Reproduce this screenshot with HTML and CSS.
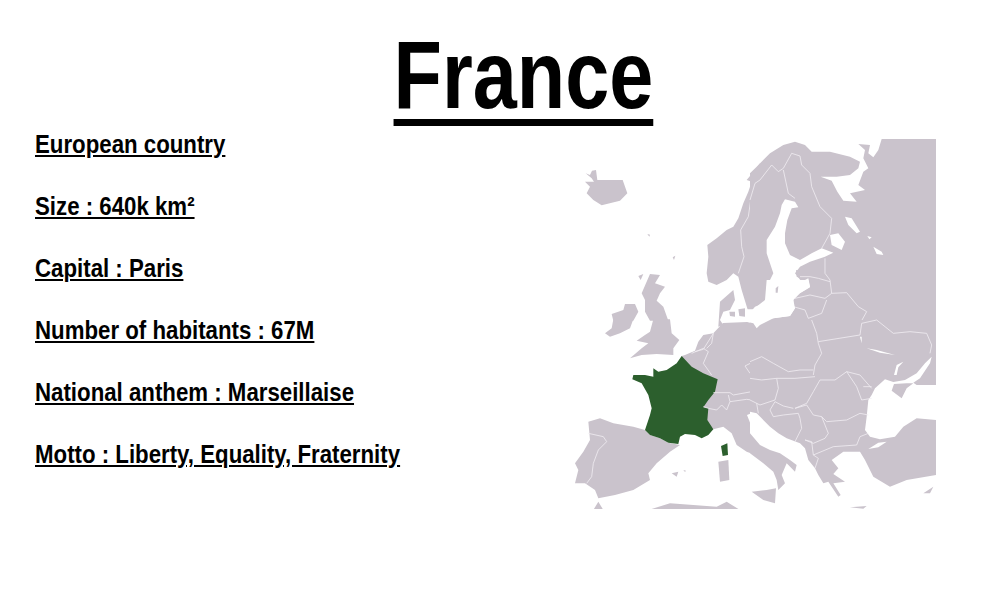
FILE: index.html
```html
<!DOCTYPE html>
<html lang="en">
<head>
    <meta charset="UTF-8">
    <meta name="viewport" content="width=device-width, initial-scale=1.0">
    <title>France</title>
    <link rel="stylesheet" href="styles.css">
</head>
<body>
    <h1 class="title"><span class="title-text">France</span></h1>
    <div class="content">
        <ul class="facts">
            <li>European country</li>
            <li>Size : 640k km²</li>
            <li>Capital : Paris</li>
            <li>Number of habitants : 67M</li>
            <li>National anthem : Marseillaise</li>
            <li>Motto : Liberty, Equality, Fraternity</li>
        </ul>
        <svg class="map" viewBox="574 139 362 370" width="362" height="370" role="img" aria-label="Map of Europe with France highlighted">
            <!-- north west -->
            <g transform="translate(570 130) scale(.33333)">
                <path class="land" d="M47 130 60 135 66 122 78 120 82 150 100 150 130 150 158 150 172 190 150 212 95 226 70 210 50 190 60 170 45 155 72 155 65 145Z"/>
                <path class="land" d="M570 100 555 120 530 150 545 155 535 185 520 220 505 265 490 290 470 300 440 325 412 345 415 380 410 430 415 455 440 465 470 450 490 430 505 440 515 480 535 545 555 548 570 530Z"/>
                <path class="land" d="M240 432 270 435 255 460 285 470 270 490 260 512 280 530 295 572 240 572 225 545 225 510 215 490Z"/>
                <path class="land" d="M125 552 160 540 165 522 195 522 205 545 190 572 130 572Z"/>
                <path class="land" d="M232 312 240 314 238 320Z M308 382 316 377 312 390Z M205 438 220 432 212 450Z"/>
                <path class="border" d="M570 150 545 190 535 260 512 300 515 350 522 380 505 430"/>
            </g>
            <!-- north east -->
            <g transform="translate(750 130) scale(.33333)">
                <path class="land" d="M395 27 558 27 558 572 0 572 0 130 20 110 60 70 100 45 135 35 165 45 185 65 240 65 300 80 330 95 325 115 300 135 260 140 212 140 245 152 262 185 280 212 320 215 300 190 345 180 325 165 340 125 355 115 340 85 345 60 325 42 360 45 355 70 370 82 385 60Z"/>
                <path class="sea" d="M105 208 135 215 145 232 125 235 112 270 105 310 105 340 120 375 150 390 185 370 215 355 250 368 225 380 180 395 150 410 135 430 155 455 175 445 180 470 165 480 130 500 130 525 135 535 120 558 70 565 0 572 0 548 15 530 55 515 50 470 70 430 50 370 50 330 75 290 90 250 95 225Z"/>
                <path class="sea" d="M240 315 265 310 285 335 275 360 245 345Z M285 260 305 265 330 305 320 310 295 285Z M352 318 365 322 358 328Z M370 350 395 365 400 375 380 372Z"/>
                <path class="land" d="M138 420 150 422 150 445 140 440Z M78 470 86 468 85 490 78 490Z"/>
                <path class="border" d="M0 210 15 160 30 150 65 105 85 125 100 115 125 70 150 78 155 105 180 130 185 170 210 230 245 265 240 310 215 355"/>
                <path class="border" d="M100 120 115 190 135 205"/>
                <path class="border" d="M225 385 225 430 240 450 245 490 290 488 325 530 350 545 335 572"/>
                <path class="border" d="M150 440 180 440 205 445 240 455"/>
                <path class="border" d="M135 505 180 495 225 505 245 490"/>
                <path class="border" d="M130 530 165 540 175 565 215 550 230 510"/>
            </g>
            <!-- south west -->
            <g transform="translate(570 320) scale(.33333)">
                <path class="land" d="M130 -2 190 -2 180 25 150 40 120 50 105 40 125 25Z"/>
                <path class="land" d="M250 -2 300 -2 305 40 328 60 310 85 310 105 260 102 215 105 180 115 215 85 235 70 200 62 225 45 240 35Z"/>
                <path class="land" d="M335 108 345 105 375 92 385 65 400 45 430 40 459 9 531 6 549 9 570 0 570 410 530 395 500 375 485 340 460 320 430 328 400 300Z"/>
                <path class="sea" d="M531 285 555 275 572 290 572 345 545 320Z"/>
                <path class="land" d="M55 305 90 295 130 310 190 320 225 330 240 345 270 355 295 368 330 375 300 395 260 430 235 460 240 480 190 510 135 525 85 535 75 510 45 490 15 490 25 450 15 430 40 395 60 360Z"/>
                <path class="land" d="M305 460 325 455 320 470Z M340 450 348 452 345 456Z"/>
                <path class="land" d="M445 425 475 420 478 480 450 485Z"/>
                <path class="land" d="M70 570 85 545 100 570Z M235 570 300 550 370 555 440 560 470 545 510 570Z M548 520 570 515 570 535Z"/>
                <path class="border" d="M55 340 100 350 110 365 85 390 70 430 65 470 50 490"/>
                <path class="border" d="M365 100 400 85 415 95 400 130 425 165"/>
                <path class="border" d="M375 95 400 88 430 40 425 70 410 85"/>
                <path class="france" d="M335 108 365 140 400 160 443 178 435 215 415 240 400 262 415 265 412 300 430 328 415 345 395 355 375 345 345 342 330 350 325 372 295 368 270 355 240 345 225 330 240 285 245 265 235 225 215 190 187 178 190 165 225 165 250 170 250 145 265 155 290 150 320 130Z"/>
                <path class="france" d="M453 378 472 370 474 405 458 408Z"/>
            </g>
            <!-- alps and central europe -->
            <g transform="translate(680 340) scale(.33333)">
                <path class="border" d="M100 158 150 158 160 165 215 155 215 135 238 125 290 115"/>
                <path class="border" d="M195 78 250 50 290 70 330 90 310 115 290 115 240 125 210 100 195 78"/>
                <path class="border" d="M235 0 250 50"/>
                <path class="border" d="M70 200 85 205 110 210 125 195 140 210 150 185 200 178 215 180 260 190 290 180"/>
                <path class="border" d="M145 165 150 185"/>
                <path class="border" d="M230 195 235 230"/>
            </g>
            <!-- south east -->
            <g transform="translate(750 320) scale(.33333)">
                <path class="land" d="M0 0 558 0 558 570 0 570Z"/>
                <path class="sea" d="M0 275 20 280 35 295 60 320 85 340 110 355 150 370 165 385 175 420 195 445 205 465 220 490 235 485 265 530 272 525 250 490 285 485 250 462 265 445 245 420 280 395 330 395 345 420 370 470 420 500 470 480 558 465 558 570 0 570Z"/>
                <path class="sea" d="M375 205 405 178 430 186 465 180 500 160 525 130 545 110 540 130 510 175 490 188 500 195 558 195 558 300 500 295 460 320 435 350 390 358 360 350 345 330 350 290 355 240 365 225Z"/>
                <path class="land" d="M432 192 470 190 490 190 470 205 455 235 425 212Z"/>
                <path class="sea" d="M350 85 380 90 435 105 390 98Z M432 165 440 135 460 125 445 142 440 165Z M330 50 335 50 335 70Z"/>
                <path class="sea" d="M355 387 385 368 410 365 385 382Z"/>
                <path class="land" d="M0 340 30 375 60 390 90 400 120 420 140 435 135 455 110 430 95 465 105 490 85 510 80 480 70 455 40 430 0 400Z"/>
                <path class="land" d="M5 515 50 510 78 505 75 550 40 540Z"/>
                <path class="land" d="M520 520 550 500 540 520Z M300 562 350 558 340 566Z"/>
                <path class="border" d="M185 0 200 40 205 70 215 100 195 135 190 165"/>
                <path class="border" d="M205 65 330 45 335 10 380 0 430 40 480 35 530 40 545 75 540 100"/>
                <path class="border" d="M0 125 35 110 70 130 115 155 150 150 190 150"/>
                <path class="border" d="M80 175 135 175 195 170"/>
                <path class="border" d="M210 180 190 215 170 250 135 265"/>
                <path class="border" d="M210 180 255 180 290 155 330 165 365 205"/>
                <path class="border" d="M290 155 320 200 335 240 365 235"/>
                <path class="border" d="M340 200 365 200"/>
                <path class="border" d="M215 290 230 305 290 300 330 280 355 285"/>
                <path class="border" d="M135 265 170 255 190 285 215 290 235 340 225 355 190 370 165 360"/>
                <path class="border" d="M190 405 250 380 320 375 330 350 355 340"/>
                <path class="border" d="M75 245 60 270 70 290 100 285 145 280 150 295 155 325 135 365"/>
                <path class="border" d="M75 245 100 258 130 265"/>
                <path class="border" d="M0 175 35 180 80 175 85 205 75 240 30 255 0 240"/>
                <path class="border" d="M20 250 25 280"/>
                <path class="border" d="M165 360 185 365 190 405 205 415 195 445"/>
            </g>
            <!-- baltic south coast, denmark -->
            <g transform="translate(710 280) scale(.33333)">
                <path class="land" d="M30 65 70 30 75 60 60 90 40 95 30 120 40 135 25 140Z"/>
                <path class="land" d="M58 95 75 95 75 110 60 108Z M85 88 105 85 105 110 88 108Z"/>
                <path class="sea" d="M105 88 130 88 165 60 170 0 295 0 300 22 270 40 250 60 255 85 240 108 190 115 150 135 140 145 130 130 110 125 105 110Z"/>
                <path class="land" d="M197 25 205 18 203 38 197 38Z"/>
            </g>
        </svg>
    </div>
</body>
</html>
```

FILE: styles.css
```css
body {
    margin: 0;
    background-color: #fff;
    color: #000;
    font-family: "Liberation Sans", Arial, sans-serif;
    font-weight: bold;
}
.title {
    display: flex;
    justify-content: center;
    margin: 0;
    padding-left: 65px;
    height: 139px;
    font-size: 96px;
    line-height: 110px;
    padding-top: 20px;
    box-sizing: border-box;
}
.title-text {
    transform: scaleX(.825); /* the original font is a narrow one */
    text-decoration: underline;
    text-decoration-thickness: 7px;
    text-underline-offset: 11px;
}
.content {
    display: flex;
    justify-content: space-between;
    padding: 0 46px 0 35px;
}
.facts {
    list-style: none;
    margin: 0;
    padding: 0;
    display: flex;
    flex-direction: column;
    gap: 34px;
    margin-top: -9px;
    font-size: 25px;
    line-height: 28px;
    text-decoration: underline;
    transform: scaleX(.89);
    transform-origin: left top;
}
.map {
    display: block;
}
.land {
    fill: #cac3cc;
}
.sea {
    fill: #fff;
}
.france {
    fill: #2c5f2d;
}
.border {
    fill: none;
    stroke: #f1eef2;
    stroke-width: 2.4;
    stroke-linejoin: round;
}
```
